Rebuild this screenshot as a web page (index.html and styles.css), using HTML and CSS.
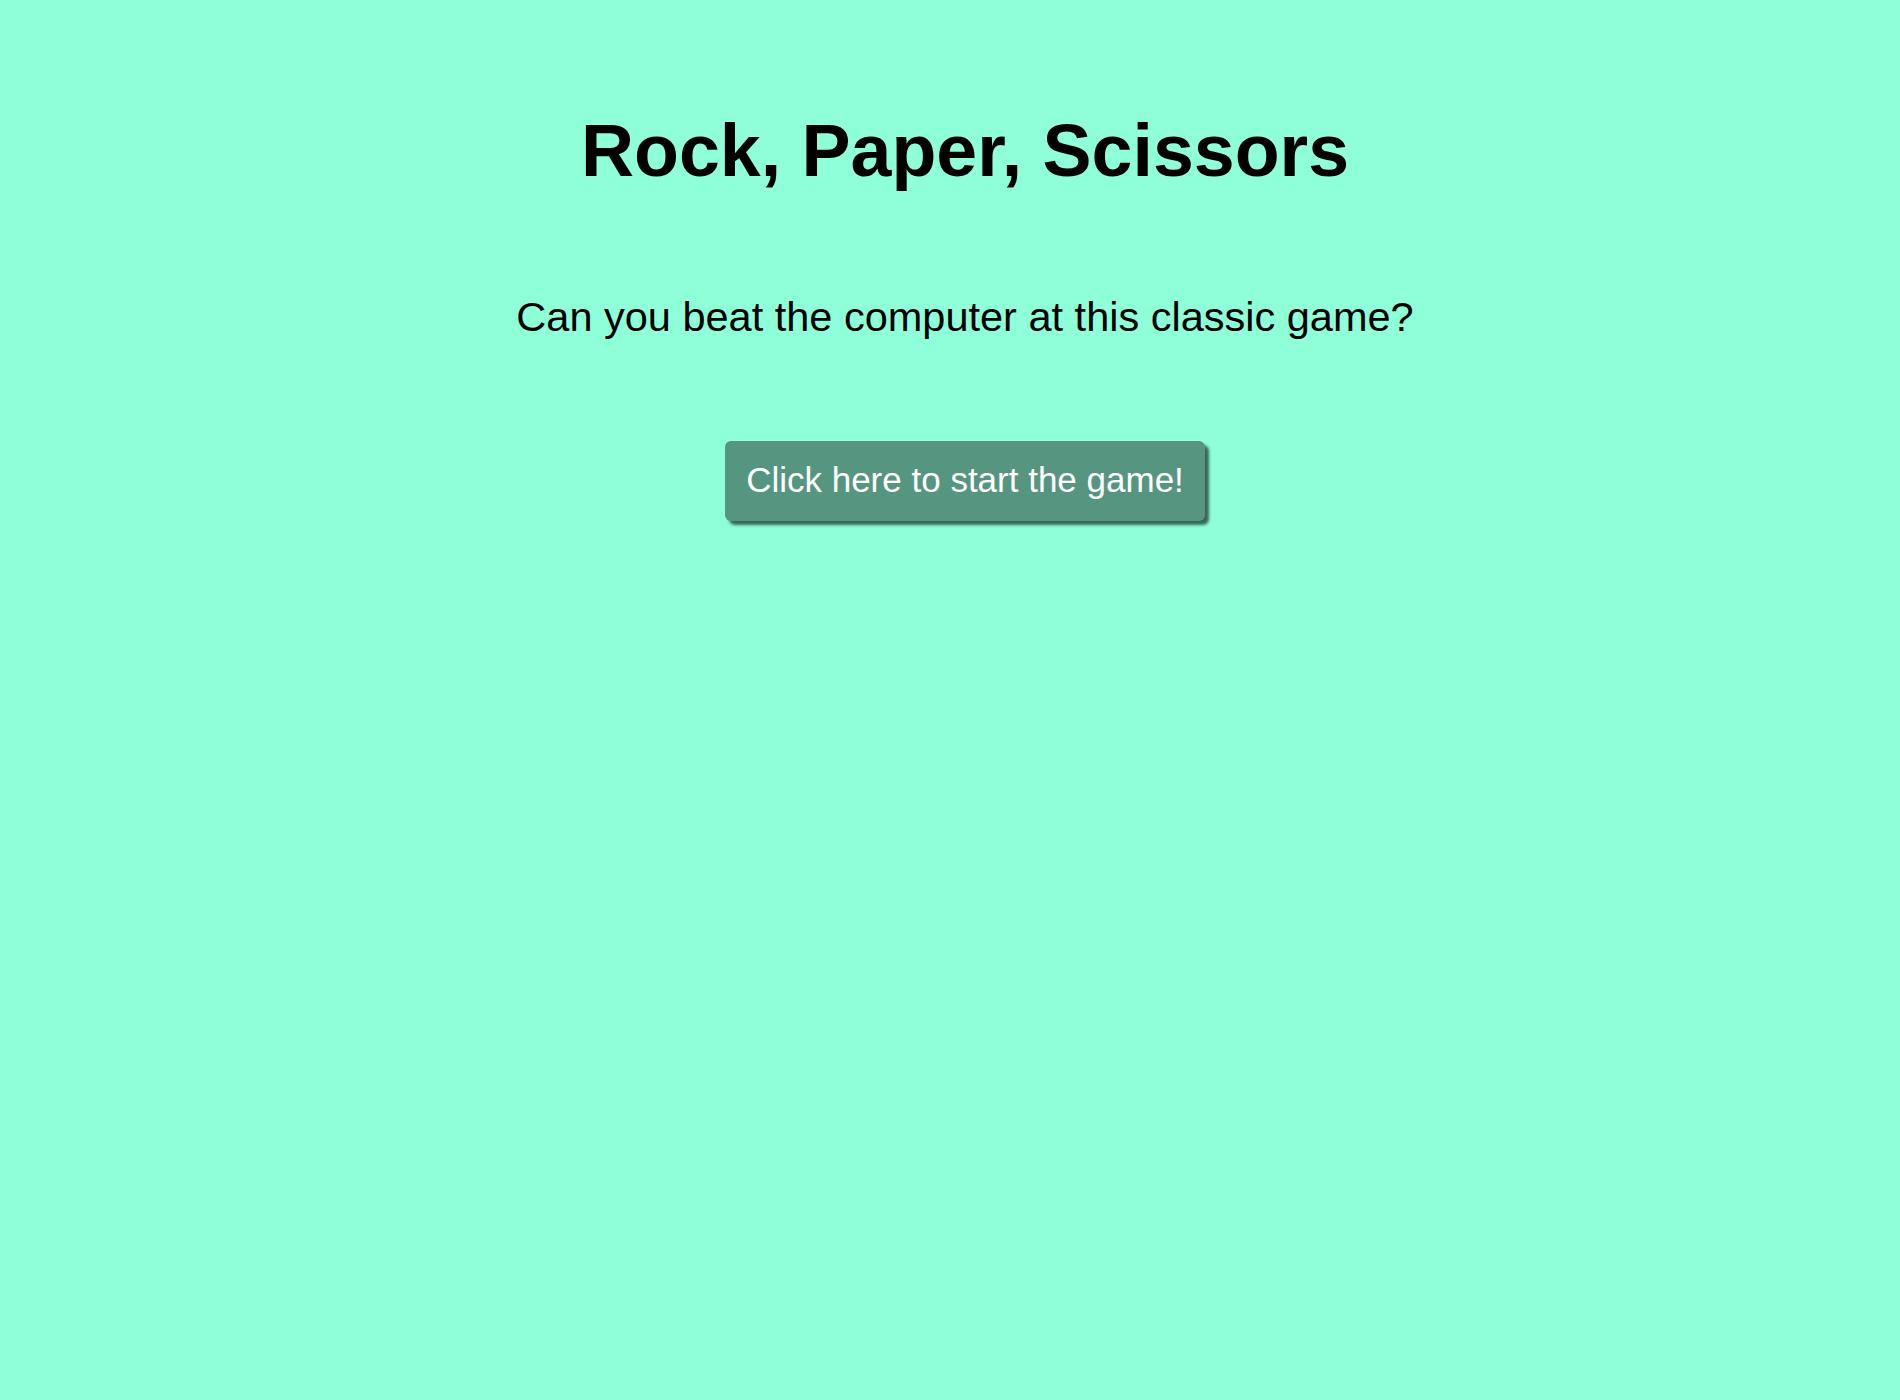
FILE: index.html
```html
<!DOCTYPE html>
<html lang="en">
<head>
<meta charset="utf-8">
<title>Rock, Paper, Scissors</title>
<link rel="stylesheet" href="styles.css">
</head>
<body>
<main class="page">
  <h1 class="title">Rock, Paper, Scissors</h1>
  <p class="intro">Can you beat the computer at this classic game?</p>
  <button class="start-btn" type="button">Click here to start the game!</button>
</main>
</body>
</html>
```
FILE: styles.css
```css
html, body {
  margin: 0;
  padding: 0;
}
body {
  background: #8fffd9;
  min-height: 1400px;
  font-family: "Liberation Sans", Arial, Helvetica, sans-serif;
  color: #000;
}
.page {
  display: flex;
  flex-direction: column;
  align-items: center;
  padding-top: 114px;
  padding-left: 30px;
}
.title {
  margin: 0;
  font-size: 73.5px;
  line-height: 1;
  font-weight: bold;
}
.intro {
  margin: 108px 0 0;
  font-size: 41.5px;
  line-height: 1;
}
.start-btn {
  margin-top: 104px;
  font-family: inherit;
  font-size: 35px;
  line-height: 1;
  color: #fff;
  background: #56957f;
  border: none;
  border-radius: 6px;
  padding: 21px 21px 24px;
  box-shadow: 4px 4px 3px rgba(0, 0, 0, 0.6);
  cursor: pointer;
}
```
